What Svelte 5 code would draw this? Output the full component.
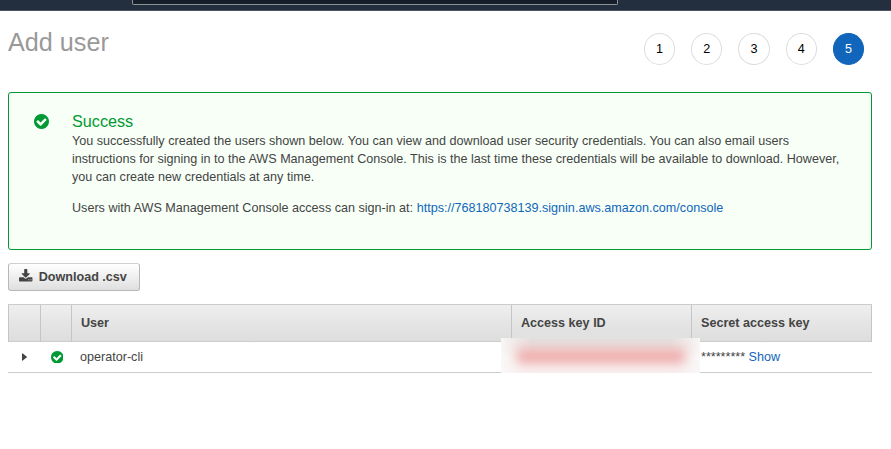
<script>
  const steps = [1, 2, 3, 4, 5];
  const current = 5;
</script>

{#snippet check()}
  <svg class="check" viewBox="0 0 1536 1536" aria-hidden="true">
    <path d="M1284 606q0-28-18-46l-91-90q-19-19-45-19t-45 19L677 877 451 651q-19-19-45-19t-45 19l-91 90q-18 18-18 46 0 27 18 45l362 362q19 19 45 19 27 0 46-19l543-543q18-18 18-45zm252 162q0 209-103 385.5T1153.5 1433 768 1536t-385.5-103T103 1153.5 0 768t103-385.5T382.5 103 768 0t385.5 103T1433 382.5 1536 768z" />
  </svg>
{/snippet}

<div class="page">
  <nav class="topbar"><div class="search"></div></nav>

  <main>
    <header>
      <h1>Add user</h1>
      <ol class="steps">
        {#each steps as step}
          <li class:active={step === current}>{step}</li>
        {/each}
      </ol>
    </header>

    <section class="alert">
      <div class="alert-icon">{@render check()}</div>
      <div class="alert-body">
        <h2>Success</h2>
        <p>
          You successfully created the users shown below. You can view and download user security credentials. You can also email users
          instructions for signing in to the AWS Management Console. This is the last time these credentials will be available to download. However,
          you can create new credentials at any time.
        </p>
        <p>Users with AWS Management Console access can sign-in at: <a href="#console">https://768180738139.signin.aws.amazon.com/console</a></p>
      </div>
    </section>

    <button type="button">
      <svg class="download" viewBox="64 0 1664 1536" aria-hidden="true">
        <path d="M1344 1344q0-26-19-45t-45-19-45 19-19 45 19 45 45 19 45-19 19-45zm256 0q0-26-19-45t-45-19-45 19-19 45 19 45 45 19 45-19 19-45zm128-224v320q0 40-28 68t-68 28h-1472q-40 0-68-28t-28-68v-320q0-40 28-68t68-28h465l135 136q58 56 136 56t136-56l136-136h464q40 0 68 28t28 68zm-325-569q17 41-14 70l-448 448q-18 19-45 19t-45-19l-448-448q-31-29-14-70 17-39 59-39h256v-448q0-26 19-45t45-19h256q26 0 45 19t19 45v448h256q42 0 59 39z" />
      </svg>
      <span>Download .csv</span>
    </button>

    <div class="table">
      <div class="row head">
        <div></div>
        <div></div>
        <div>User</div>
        <div>Access key ID</div>
        <div>Secret access key</div>
      </div>
      <div class="row body">
        <div class="center"><svg class="caret" viewBox="0 0 5 8" aria-hidden="true"><path d="M0 0.4Q0 0 0.5 0.2L4.6 3.6Q5 4 4.6 4.4L0.5 7.8Q0 8 0 7.6z" /></svg></div>
        <div class="center small">{@render check()}</div>
        <div>operator-cli</div>
        <div class="key"><div class="redacted"><i class="haze"></i><i class="smear"></i></div></div>
        <div>*********&nbsp;<a href="#show">Show</a></div>
      </div>
    </div>
  </main>
</div>

<style>
  :global(body) { background: #fff; }
  .page {
    height: 449px;
    overflow: hidden;
    font-family: "Liberation Sans", Arial, sans-serif;
    font-size: 12.6px;
    line-height: 18px;
    color: #444;
  }
  .topbar {
    box-sizing: border-box;
    height: 11px;
    padding-left: 132px;
    background: #232f3e;
    border-bottom: 1px solid #4b5462;
  }
  .search {
    box-sizing: border-box;
    width: 486px;
    height: 5px;
    background: #161e2a;
    border: 1px solid #879596;
    border-top: 0;
    border-radius: 0 0 2px 2px;
  }
  main { padding: 0 19px 0 8px; }
  header {
    display: flex;
    justify-content: space-between;
    height: 81px;
  }
  h1 {
    margin: 16px 0 0;
    font-size: 25.2px;
    line-height: 30px;
    font-weight: 400;
    color: #999;
  }
  .steps {
    display: flex;
    gap: 15.9px;
    margin: 22px 7.7px 0 0;
    padding: 0;
    list-style: none;
  }
  .steps li {
    box-sizing: border-box;
    width: 31.4px;
    height: 32px;
    border: 1px solid #ddd;
    border-radius: 50%;
    line-height: 30px;
    text-align: center;
    color: #000;
  }
  .steps .active { background: #1166bb; border-color: #1166bb; color: #fff; }
  a { color: #1166bb; text-decoration: none; }
  svg { display: block; }
  .check { width: 15px; height: 15px; fill: #009933; }
  .alert {
    box-sizing: border-box;
    display: flex;
    height: 158px;
    padding: 18px 24px 0 25px;
    border: 1px solid #009933;
    border-radius: 3px;
    background: #f7fff7;
  }
  .alert-icon { flex: none; width: 38px; padding-top: 2.5px; }
  h2 {
    margin: 0 0 1px;
    font-size: 16.2px;
    line-height: 20px;
    font-weight: 400;
    color: #009933;
  }
  p { margin: 0 0 13px; }
  button {
    box-sizing: border-box;
    display: flex;
    align-items: center;
    gap: 6px;
    width: 132px;
    height: 28px;
    margin: 13px 0;
    padding: 0 0 0 10.2px;
    border: 1px solid #b8b8b8;
    border-top-color: #d0d0d0;
    border-radius: 3px;
    background: linear-gradient(#fff, #dfdfdf);
    font: bold 12.6px/18px "Liberation Sans", Arial, sans-serif;
    color: #444;
    white-space: nowrap;
  }
  .download { width: 13.5px; height: 12.4px; margin-bottom: 3px; fill: #444; }
  .row {
    display: grid;
    grid-template-columns: 32px 31px 440px 180px 181px;
    box-sizing: border-box;
  }
  .row > div { box-sizing: border-box; padding-left: 9px; }
  .head {
    height: 38px;
    border: solid #ccc;
    border-width: 1px 0;
    background: linear-gradient(#eee, #ddd);
    font-weight: bold;
    line-height: 36px;
  }
  .head > div { border-left: 1px solid #c5c5c5; }
  .head > div:last-child { border-right: 1px solid #c5c5c5; }
  .body {
    height: 31px;
    border-bottom: 1px solid #ccc;
    line-height: 30px;
  }
  .body > div:last-child { padding-left: 10px; }
  .row .center { display: flex; align-items: center; justify-content: center; padding: 0 0 0 1px; }
  .row .small { padding-left: 3px; }
  .small .check { width: 12.5px; height: 12.5px; }
  .caret { width: 5px; height: 8px; fill: #444; }
  .key { position: relative; }
  .redacted {
    position: absolute;
    left: -10px;
    top: -14px;
    width: 199px;
    height: 45px;
    overflow: hidden;
  }
  .haze {
    position: absolute;
    inset: 10px 0 0;
    background: linear-gradient(90deg, #f9f7f7, #f9f0f0 12%, #f9f0f0 88%, #f9f7f7);
  }
  .haze::before {
    content: "";
    position: absolute;
    inset: 0;
    background: linear-gradient(#e3e0df, #ebdcdb 25%, transparent 55%);
    mask-image: linear-gradient(90deg, transparent, #000 15%, #000 85%, transparent);
  }
  .redacted::before {
    content: "";
    position: absolute;
    left: 14px;
    right: 14px;
    top: 4px;
    height: 9px;
    background: #e1e1e1;
    filter: blur(2px);
  }
  .smear {
    position: absolute;
    left: 15px;
    right: 14px;
    top: 22px;
    height: 13px;
    border-radius: 6px;
    background: #eda8a7;
    filter: blur(5.5px);
  }
</style>
